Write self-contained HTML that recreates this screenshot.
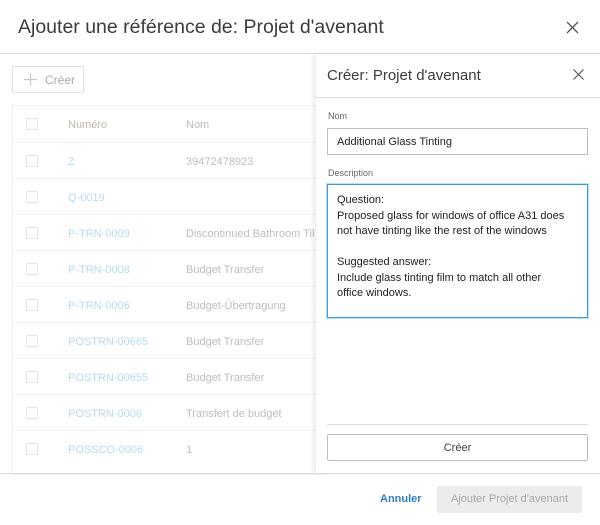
<!DOCTYPE html>
<html><head><meta charset="utf-8"><style>
*{box-sizing:border-box;margin:0;padding:0}
body{width:600px;height:525px;background:#fff;font-family:"Liberation Sans",sans-serif;position:relative;overflow:hidden;color:#3c3c3c}
.a{position:absolute}
.hdr{top:0;left:0;width:600px;height:54px;border-bottom:1px solid #dcdcdc}
.title{left:18px;top:16px;font-size:19.5px;color:#3c3c3c}
.cb{width:12px;height:12px;border:1px solid #e4e4e4;border-radius:1px}
.row{left:13px;width:310px;height:36px;border-top:1px solid #f0f0f0;font-size:11px}
.num{color:#b5dbf0}
.nom{color:#bdbdbd}
</style></head><body>
<div class="a hdr"></div>
<div class="a title">Ajouter une référence de: Projet d'avenant</div>
<svg class="a" style="left:566px;top:21px" width="13" height="13" viewBox="0 0 13 13"><path d="M1 1L12 12M12 1L1 12" stroke="#555" stroke-width="1.3"/></svg>

<div class="a" style="left:12px;top:66px;width:72px;height:27px;border:1px solid #e2e2e2;border-radius:2px"></div>
<svg class="a" style="left:24px;top:73px" width="13" height="13"><path d="M6.5 0V13M0 6.5H13" stroke="#c8c8c8" stroke-width="1.2"/></svg>
<div class="a" style="left:45px;top:73px;font-size:12px;color:#aaa">Créer</div>

<div class="a" style="left:12px;top:105px;width:315px;height:370px;border:1px solid #f0f0f0;border-right:none"></div>
<div class="a cb" style="left:26px;top:118px"></div>
<div class="a" style="left:68px;top:119px;font-size:11px;color:#bfb8ae">Numéro</div>
<div class="a" style="left:186px;top:119px;font-size:11px;color:#bdbdbd">Nom</div>

<div class="a row" style="top:142px"><div class="a cb" style="left:13px;top:12px"></div><div class="a num" style="left:55px;top:13px">Z</div><div class="a nom" style="left:173px;top:13px">39472478923</div></div>
<div class="a row" style="top:178px"><div class="a cb" style="left:13px;top:12px"></div><div class="a num" style="left:55px;top:13px">Q-0019</div></div>
<div class="a row" style="top:214px"><div class="a cb" style="left:13px;top:12px"></div><div class="a num" style="left:55px;top:13px">P-TRN-0009</div><div class="a nom" style="left:173px;top:13px;white-space:nowrap">Discontinued Bathroom Tile</div></div>
<div class="a row" style="top:250px"><div class="a cb" style="left:13px;top:12px"></div><div class="a num" style="left:55px;top:13px">P-TRN-0008</div><div class="a nom" style="left:173px;top:13px">Budget Transfer</div></div>
<div class="a row" style="top:286px"><div class="a cb" style="left:13px;top:12px"></div><div class="a num" style="left:55px;top:13px">P-TRN-0006</div><div class="a nom" style="left:173px;top:13px">Budget-Übertragung</div></div>
<div class="a row" style="top:322px"><div class="a cb" style="left:13px;top:12px"></div><div class="a num" style="left:55px;top:13px">POSTRN-00665</div><div class="a nom" style="left:173px;top:13px">Budget Transfer</div></div>
<div class="a row" style="top:358px"><div class="a cb" style="left:13px;top:12px"></div><div class="a num" style="left:55px;top:13px">POSTRN-00655</div><div class="a nom" style="left:173px;top:13px">Budget Transfer</div></div>
<div class="a row" style="top:394px"><div class="a cb" style="left:13px;top:12px"></div><div class="a num" style="left:55px;top:13px">POSTRN-0006</div><div class="a nom" style="left:173px;top:13px">Transfert de budget</div></div>
<div class="a row" style="top:430px"><div class="a cb" style="left:13px;top:12px"></div><div class="a num" style="left:55px;top:13px">POSSCO-0006</div><div class="a nom" style="left:173px;top:13px">1</div></div>

<div class="a" style="left:315px;top:54px;width:285px;height:419px;background:#fff;box-shadow:-2px 0 4px rgba(0,0,0,0.08);border-left:1px solid #eee"></div>
<div class="a" style="left:315px;top:97px;width:285px;border-top:1px solid #dcdcdc"></div>
<div class="a" style="left:327px;top:67px;font-size:15px;color:#3c3c3c">Créer: Projet d'avenant</div>
<svg class="a" style="left:573px;top:69px" width="11" height="11"><path d="M0.5 0.5L10.5 10.5M10.5 0.5L0.5 10.5" stroke="#555" stroke-width="1.2"/></svg>
<div class="a" style="left:328px;top:111px;font-size:9px;color:#666">Nom</div>
<div class="a" style="left:327px;top:128px;width:261px;height:27px;border:1px solid #bdbdbd;font-size:11px;padding:7px 0 0 9px;color:#222">Additional Glass Tinting</div>
<div class="a" style="left:328px;top:168px;font-size:9px;color:#666">Description</div>
<div class="a" style="left:327px;top:184px;width:261px;height:134px;border:1px solid #3a9ad8;box-shadow:0 0 0 1px #bfe0f4;font-size:11px;line-height:15.5px;padding:8px 0 0 9px;color:#222;white-space:nowrap">Question:<br>Proposed glass for windows of office A31 does<br>not have tinting like the rest of the windows<br><br>Suggested answer:<br>Include glass tinting film to match all other<br>office windows.</div>
<div class="a" style="left:327px;top:424px;width:261px;border-top:1px solid #dcdcdc"></div>
<div class="a" style="left:327px;top:434px;width:261px;height:27px;border:1px solid #bdbdbd;border-radius:2px;font-size:11px;text-align:center;padding-top:7px;color:#3c3c3c">Créer</div>

<div class="a" style="left:0;top:473px;width:600px;border-top:1px solid #dcdcdc"></div>
<div class="a" style="left:380px;top:493px;font-size:11px;font-weight:bold;color:#2d7fc1">Annuler</div>
<div class="a" style="left:437px;top:486px;width:145px;height:27px;background:#ececec;border-radius:2px;font-size:11px;color:#a8a8a8;text-align:center;padding-top:7px">Ajouter Projet d'avenant</div>
</body></html>
